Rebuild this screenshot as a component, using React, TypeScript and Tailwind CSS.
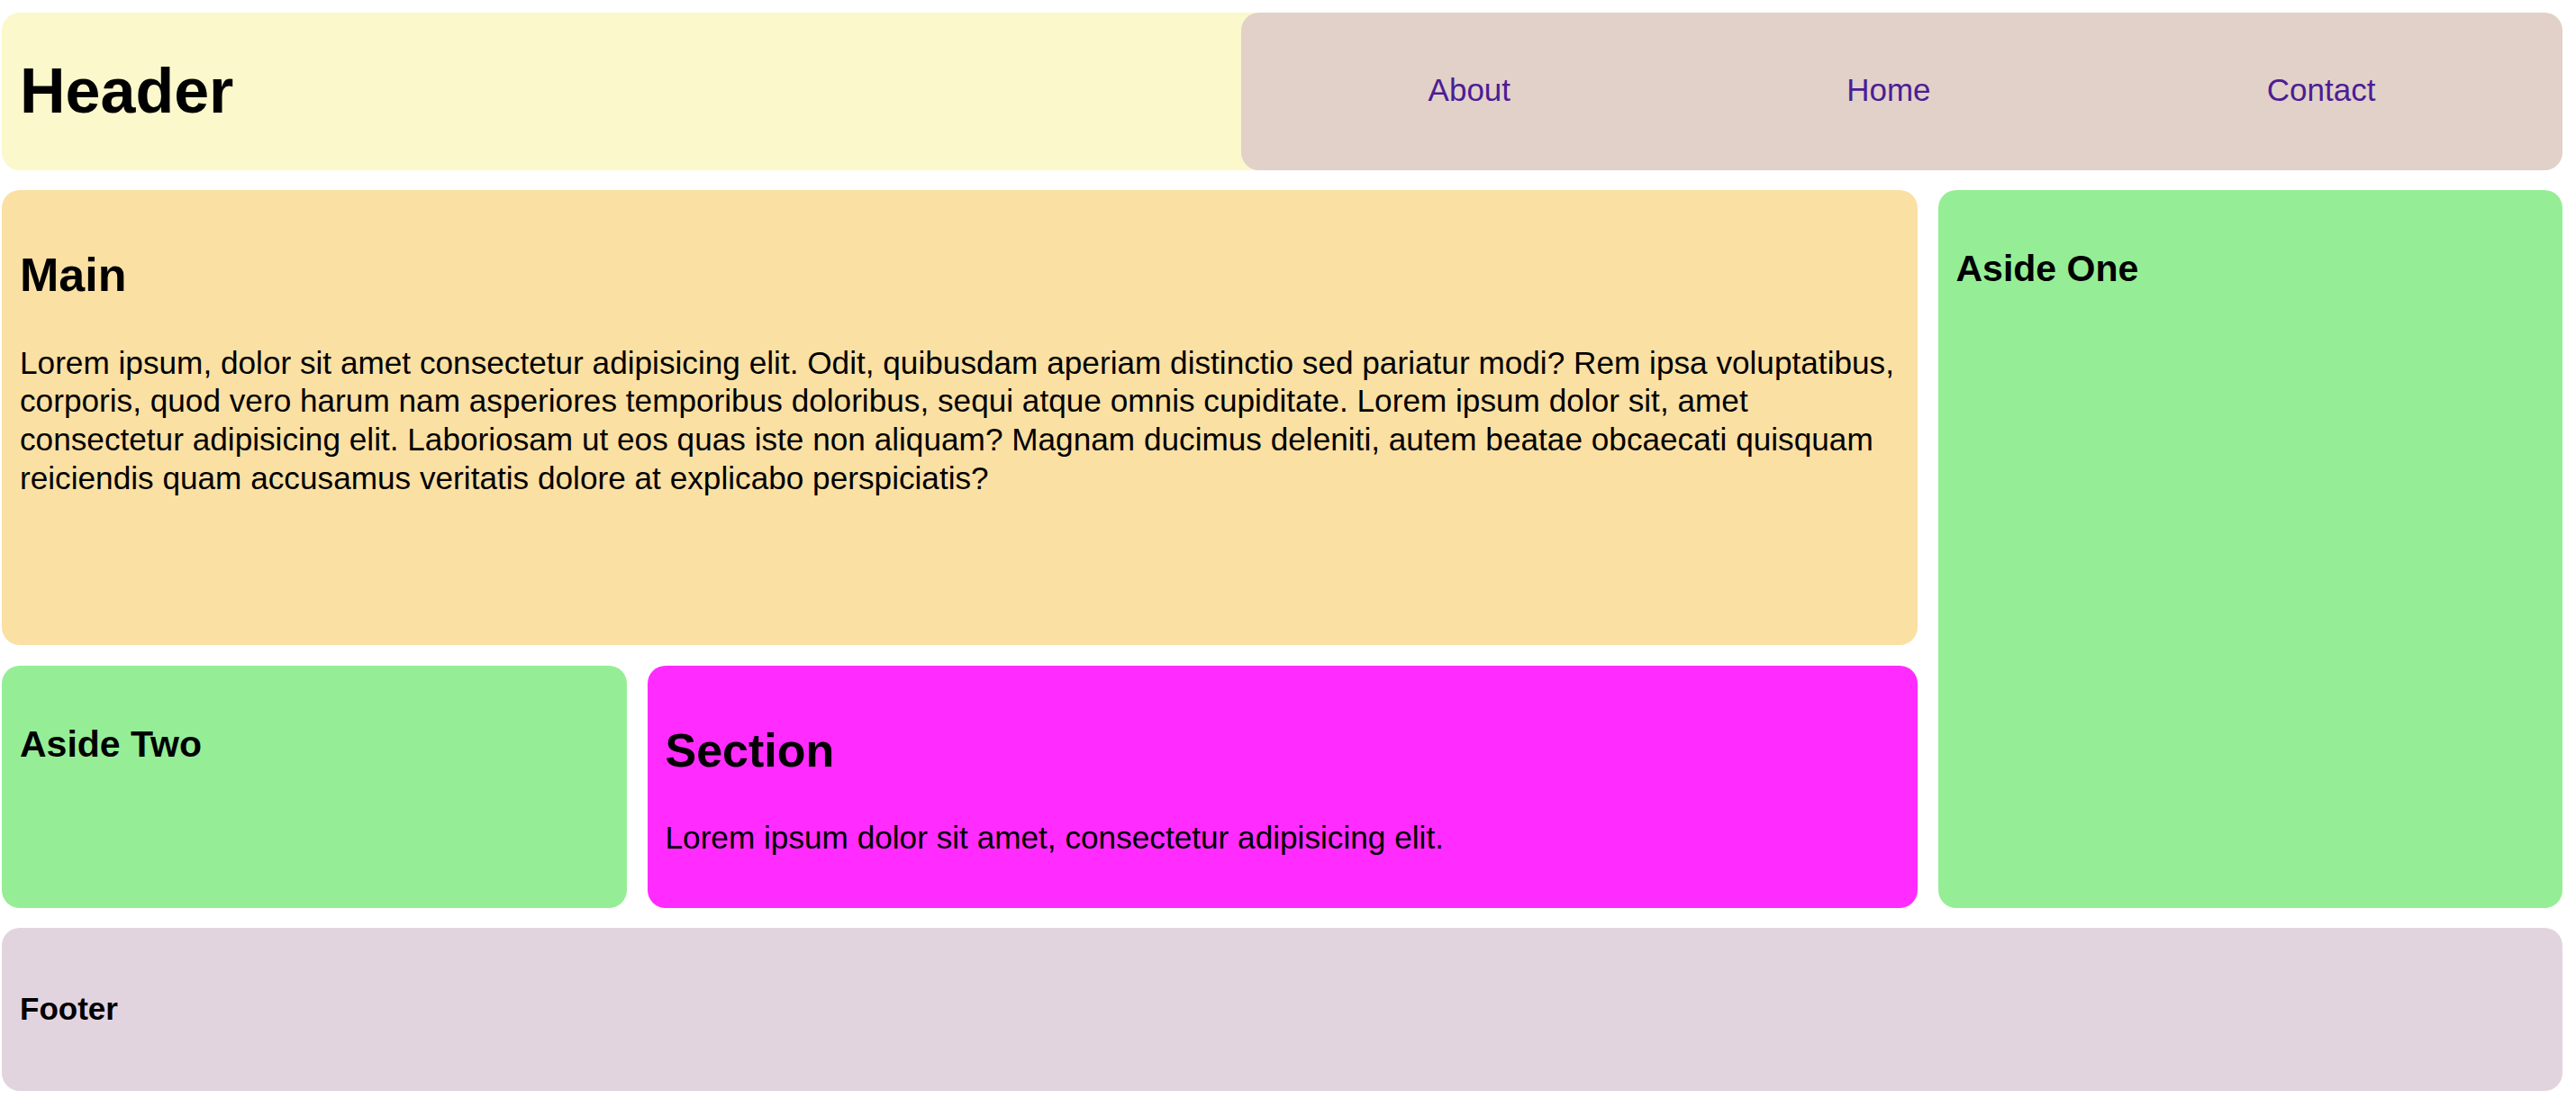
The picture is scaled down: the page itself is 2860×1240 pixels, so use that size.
const links = ["About", "Home", "Contact"];

export default function App() {
  return (
    <div
      className="min-h-screen bg-white text-black pl-[2px] pr-[15px] pt-[14px] pb-[31px]"
      style={{ fontFamily: '"Liberation Sans", Arial, Helvetica, sans-serif' }}
    >
      <div className="grid grid-cols-4 grid-rows-[auto_505px_auto_auto] gap-x-[23px] gap-y-[22.5px]">
        <header className="col-span-4 flex items-stretch justify-between rounded-[20px] bg-[#fbf8cc] pl-5">
          <h1 className="my-[47px] text-[70px] font-bold leading-[1.15]">Header</h1>
          <nav className="flex w-[1467px] items-center rounded-[20px] bg-[#e2d1c8] px-[21px]">
            <ul className="flex w-full items-center justify-around pb-[2px]">
              {links.map((l) => (
                <li key={l}>
                  <a href="#" className="text-[35px] leading-[1.15] text-[#4c1d95]">
                    {l}
                  </a>
                </li>
              ))}
            </ul>
          </nav>
        </header>

        <main className="col-span-3 rounded-[20px] bg-[#fbe0a3] px-5 py-[22px]">
          <h2 className="mt-[43px] text-[52px] font-bold leading-[1.15]">Main</h2>
          <p className="mt-[46px] text-[35.2px] leading-[42.6px]">
            Lorem ipsum, dolor sit amet consectetur adipisicing elit. Odit, quibusdam aperiam distinctio sed
            pariatur modi? Rem ipsa voluptatibus, corporis, quod vero harum nam asperiores temporibus doloribus,
            sequi atque omnis cupiditate. Lorem ipsum dolor sit, amet consectetur adipisicing elit. Laboriosam ut
            eos quas iste non aliquam? Magnam ducimus deleniti, autem beatae obcaecati quisquam reiciendis quam
            accusamus veritatis dolore at explicabo perspiciatis?
          </p>
        </main>

        <aside className="row-span-2 rounded-[20px] bg-[#95ee96] px-5 py-[22px]">
          <h3 className="my-[42px] text-[41px] font-bold leading-[1.15]">Aside One</h3>
        </aside>

        <aside className="rounded-[20px] bg-[#95ee96] px-5 py-[22px]">
          <h3 className="my-[42px] text-[41px] font-bold leading-[1.15]">Aside Two</h3>
        </aside>

        <section className="col-span-2 rounded-[20px] bg-[#ff2bff] px-5 py-[22px]">
          <h2 className="mt-[43px] text-[52px] font-bold leading-[1.15]">Section</h2>
          <p className="mt-[46px] mb-[34px] text-[35.2px] leading-[42.6px]">
            Lorem ipsum dolor sit amet, consectetur adipisicing elit.
          </p>
        </section>

        <footer className="col-span-4 rounded-[20px] bg-[#e2d4de] px-5 py-[22px]">
          <h4 className="my-[48px] text-[35px] font-bold leading-[1.15]">Footer</h4>
        </footer>
      </div>
    </div>
  );
}
